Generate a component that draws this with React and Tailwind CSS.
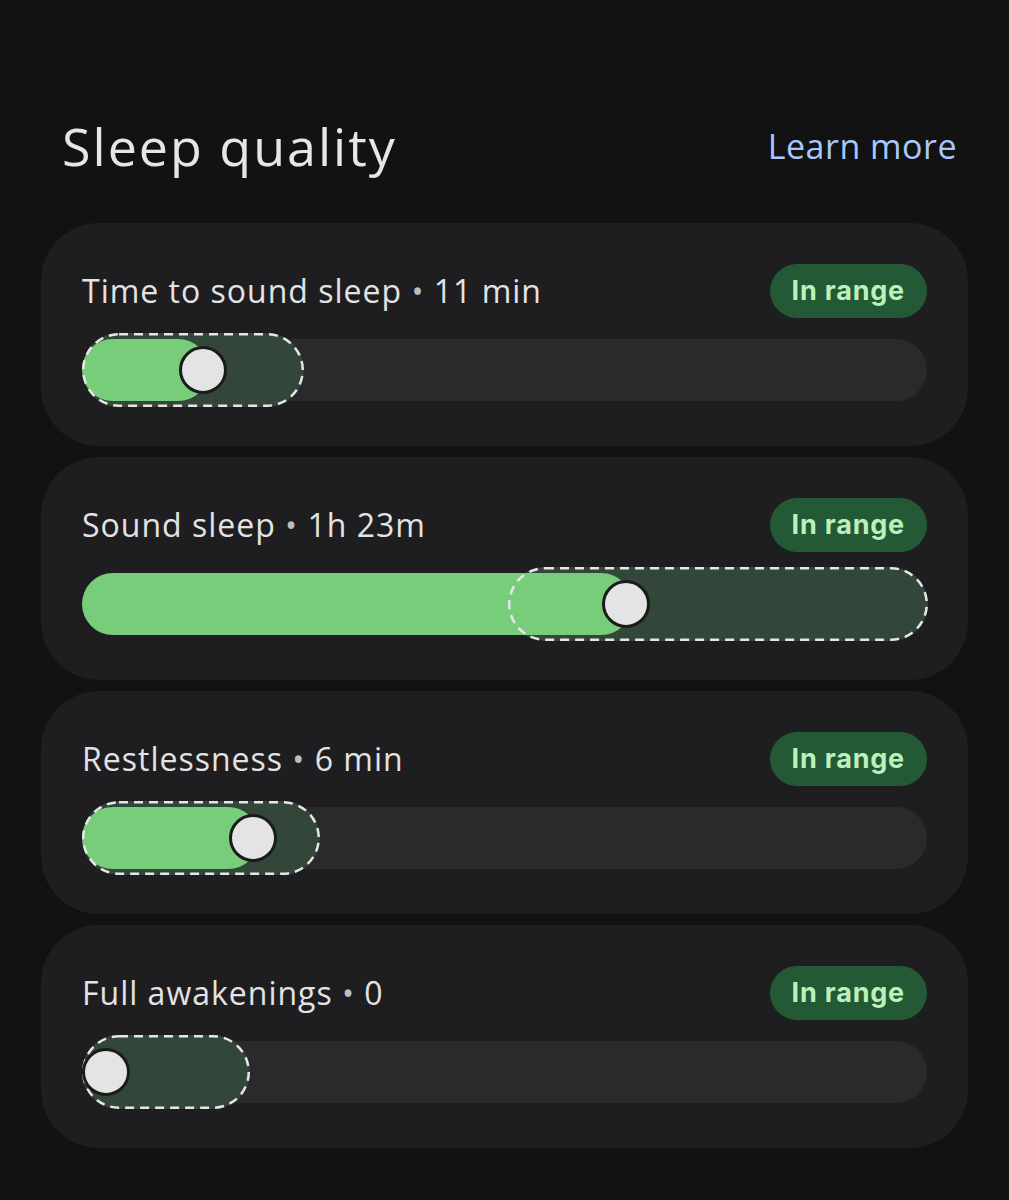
const items = [
  { label: 'Time to sound sleep', value: '11 min', fill: 121, range: [0, 222] },
  { label: 'Sound sleep', value: '1h 23m', fill: 544, range: [426, 846] },
  { label: 'Restlessness', value: '6 min', fill: 171, range: [0, 238] },
  { label: 'Full awakenings', value: '0', fill: 24, range: [0, 168], empty: true },
];

function Slider({ fill, range, empty }) {
  const w = range[1] - range[0];
  return (
    <div className="relative h-[62px] rounded-full bg-[#2a2a2c]">
      <div className="absolute top-[-6px] h-[74px] rounded-full bg-[#33463a]" style={{ left: range[0], width: w }} />
      {!empty && (
        <div className="absolute top-0 bottom-0 left-0 rounded-full bg-[#78cd7a]" style={{ width: fill + 6 }} />
      )}
      <svg className="absolute top-[-6px]" style={{ left: range[0] }} width={w} height="74">
        <rect x="1.25" y="1.25" width={w - 2.5} height="71.5" rx="35.75" fill="none" stroke="#e6e6e6" strokeWidth="2.5" strokeDasharray="9 6" />
      </svg>
      <div
        className="absolute top-1/2 h-[48px] w-[48px] -translate-x-1/2 -translate-y-1/2 rounded-full bg-[#e4e4e4] border-[3px] border-[#1b1b1b]"
        style={{ left: fill }}
      />
    </div>
  );
}

export default function App() {
  return (
    <div className="min-h-[1200px] bg-[#121212] px-[41px] pt-[110px] font-['Open_Sans',sans-serif]">
      <div className="flex items-center justify-between pl-[21px] pr-[11px] h-[72px] mb-[41px]">
        <h1 className="text-[52px] leading-none text-[#e6e6e6] tracking-[2px]">Sleep quality</h1>
        <span className="text-[34px] text-[#a8c7fa] tracking-[0.5px]">Learn more</span>
      </div>
      <div className="flex flex-col gap-[11px]">
        {items.map((it) => (
          <div key={it.label} className="rounded-[58px] bg-[#1e1e20] px-[41px] pt-[41px] pb-[45px]">
            <div className="flex items-center justify-between h-[54px] mb-[21px]">
              <span className="text-[32px] text-[#e3e3e3] tracking-[1px]">
                {it.label} <span className="text-[#bdbdbd]">•</span> {it.value}
              </span>
              <span className="h-[54px] px-[22px] flex items-center rounded-full bg-[#235a35] text-[#bdf0bb] text-[27px] font-bold tracking-[0.8px] font-['Inter',sans-serif]">
                In range
              </span>
            </div>
            <Slider {...it} />
          </div>
        ))}
      </div>
    </div>
  );
}
